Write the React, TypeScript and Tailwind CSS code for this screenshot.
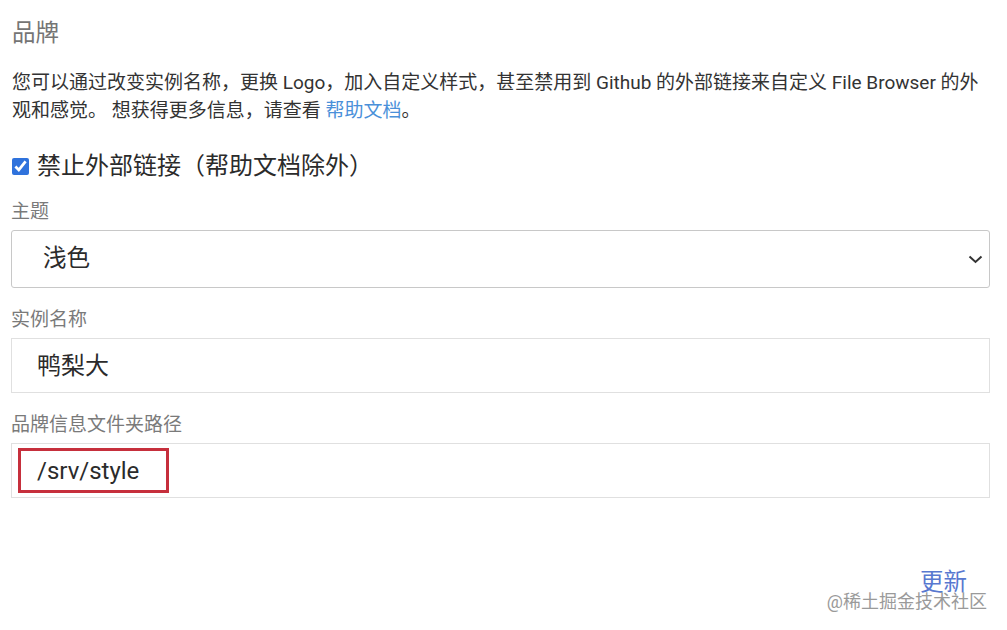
import React from 'react'

const font = { fontFamily: 'Roboto, "Noto Sans CJK SC", sans-serif' }

const Field = ({ label, children }: { label: string; children: React.ReactNode }) => (
  <div className="flex flex-col">
    <label className="text-[19px] leading-[26px] text-[#7a7a7a] mb-[5px]">{label}</label>
    {children}
  </div>
)

export default function App() {
  return (
    <div className="relative w-[1007px] h-[630px] bg-white overflow-hidden" style={font}>
      <div className="pl-[11px] pr-[17px] pt-[16px]">
        <h2 className="text-[23.5px] leading-[34px] text-[#757575] pl-px">品牌</h2>

        <p className="mt-[19px] text-[19px] leading-[28px] text-[#333] pl-px">
          您可以通过改变实例名称，更换 Logo，加入自定义样式，甚至禁用到 Github 的外部链接来自定义 File Browser 的外观和感觉。 想获得更多信息，请查看{' '}
          <a className="text-[#4a90d9]">帮助文档</a>。
        </p>

        <div className="mt-[24px] flex items-center gap-[8px] pl-px">
          <input type="checkbox" defaultChecked className="w-[17px] h-[17px] accent-[#2f72dc]" />
          <span className="text-[24px] leading-[34px] text-[#2b2b2b]">禁止外部链接（帮助文档除外）</span>
        </div>

        <div className="mt-[16px] flex flex-col gap-[19px]">
          <Field label="主题">
            <div className="flex items-center justify-between h-[58px] border border-[#c8c8c8] rounded-[3px] pl-[31px] pr-[6px]">
              <span className="text-[23.5px] text-[#2b2b2b]">浅色</span>
              <svg width="15" height="9" viewBox="0 0 15 9" fill="none">
                <path d="M1.5 1.5 L7.5 7 L13.5 1.5" stroke="#333" strokeWidth="2" />
              </svg>
            </div>
          </Field>

          <Field label="实例名称">
            <div className="flex items-center h-[55px] border border-[#e0e0e0] pl-[25px]">
              <span className="text-[24px] text-[#2b2b2b]">鸭梨大</span>
            </div>
          </Field>

          <Field label="品牌信息文件夹路径">
            <div className="relative flex items-center h-[55px] border border-[#e0e0e0] pl-[25px]">
              <span className="text-[24px] text-[#2b2b2b]">/srv/style</span>
              <div className="absolute left-[6px] top-[4px] w-[151px] h-[45px] border-[3px] border-[#c62f3c]" />
            </div>
          </Field>
        </div>

        <div className="mt-[69px] flex justify-end pr-[23px]">
          <button className="text-[23.5px] leading-[30px] text-[#5878d0]">更新</button>
        </div>
      </div>

      <div className="absolute right-[20px] top-[588px] text-[18px] text-[#9a9a9a]">@稀土掘金技术社区</div>
    </div>
  )
}
